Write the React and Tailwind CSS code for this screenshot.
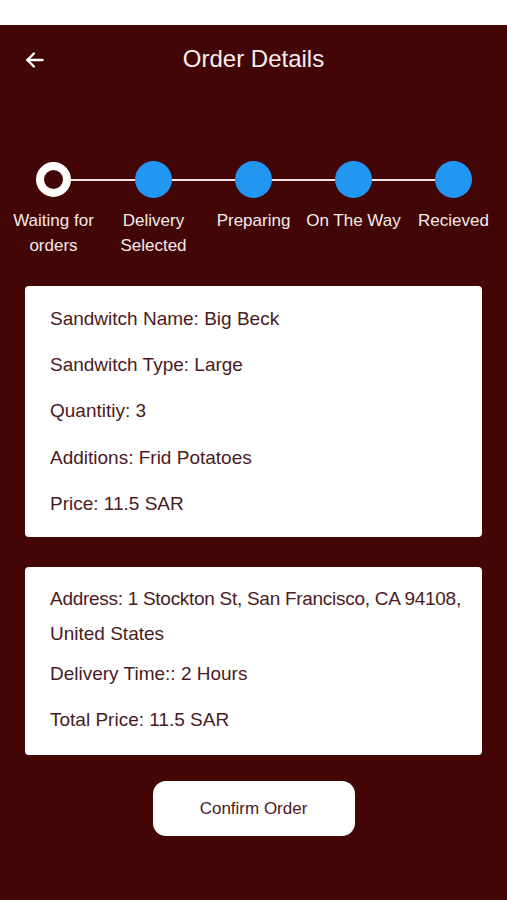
import React from 'react'

const steps = [
  { label: ['Waiting for', 'orders'], active: true },
  { label: ['Delivery', 'Selected'] },
  { label: ['Preparing'] },
  { label: ['On The Way'] },
  { label: ['Recieved'] },
]

const orderInfo = [
  'Sandwitch Name: Big Beck',
  'Sandwitch Type: Large',
  'Quantitiy: 3',
  'Additions: Frid Potatoes',
  'Price: 11.5 SAR',
]

function Stepper() {
  return (
    <div className="mx-auto grid w-[500px] grid-cols-5">
      {steps.map((s, i) => (
        <div key={i} className="flex flex-col items-center">
          <div className="relative flex h-[35px] w-full items-center justify-center">
            {i > 0 && <div className="absolute left-0 right-1/2 top-1/2 h-[2px] -translate-y-1/2 bg-[#f3e6e6]" />}
            {i < steps.length - 1 && <div className="absolute left-1/2 right-0 top-1/2 h-[2px] -translate-y-1/2 bg-[#f3e6e6]" />}
            {s.active ? (
              <div className="relative h-[35px] w-[35px] rounded-full border-[8px] border-white bg-[#420607]" />
            ) : (
              <div className="relative h-[37px] w-[37px] rounded-full bg-[#2196f3]" />
            )}
          </div>
          <div className="mt-[11px] text-center text-[17px] leading-[25px] text-[#f5eaea]">
            {s.label.map((l) => (
              <div key={l}>{l}</div>
            ))}
          </div>
        </div>
      ))}
    </div>
  )
}

export default function App() {
  return (
    <div className="min-h-[900px] bg-white pt-[25px] font-['Liberation_Sans',Arial,sans-serif]">
      <div className="min-h-[875px] bg-[#420607] pb-10">
        <header className="relative flex h-[67px] items-center justify-center">
          <button className="absolute left-[22px] top-[22px] text-white">
            <svg width="26" height="26" viewBox="0 0 24 24" fill="none" stroke="currentColor" strokeWidth="2.2" strokeLinecap="round" strokeLinejoin="round">
              <path d="M19 12H5" />
              <path d="M11 6l-6 6 6 6" />
            </svg>
          </button>
          <h1 className="text-[24px] text-[#f7eeee]">Order Details</h1>
        </header>

        <div className="pt-[70px]">
          <Stepper />
        </div>

        <div className="mx-[25px] mt-[28px] rounded-[4px] bg-white pb-[10px] pl-[25px] pr-5 pt-[10px] text-[19px] text-[#4a1a22]">
          {orderInfo.map((t) => (
            <div key={t} className="flex h-[46.25px] items-center">{t}</div>
          ))}
        </div>

        <div className="mx-[25px] mt-[30px] rounded-[4px] bg-white pb-[12px] pl-[25px] pr-3 pt-[14px] text-[19px] text-[#4a1a22]">
          <p className="leading-[35px]">
            <span className="whitespace-nowrap tracking-[-0.015em]">Address: 1 Stockton St, San Francisco, CA 94108,</span>
            <br />
            United States
          </p>
          <div className="flex h-[46px] items-center">Delivery Time:: 2 Hours</div>
          <div className="flex h-[46px] items-center">Total Price: 11.5 SAR</div>
        </div>

        <div className="mt-[26px] flex justify-center">
          <button className="h-[55px] w-[202px] rounded-[13px] bg-white text-[17px] text-[#4a1a22]">
            Confirm Order
          </button>
        </div>
      </div>
    </div>
  )
}
